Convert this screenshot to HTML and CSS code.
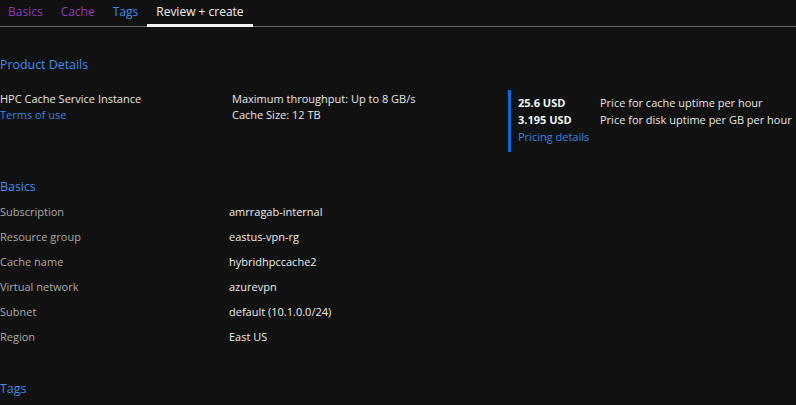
FILE: index.html
```html
<!DOCTYPE html>
<html lang="en">

<head>
  <meta charset="UTF-8">
  <meta name="viewport" content="width=device-width, initial-scale=1.0">
  <title>Review + create</title>
  <link rel="stylesheet" href="styles.css">
</head>

<body>
  <div class="tabs">
    <a href="#" class="tab visited">Basics</a>
    <a href="#" class="tab visited">Cache</a>
    <a href="#" class="tab">Tags</a>
    <a href="#" class="tab active">Review + create</a>
  </div>

  <h3 class="section-title first">Product Details</h3>
  <div class="product">
    <div class="product-col name-col">
      <div>HPC Cache Service Instance</div>
      <a href="#" class="link">Terms of use</a>
    </div>
    <div class="product-col spec-col">
      <div>Maximum throughput: Up to 8 GB/s</div>
      <div>Cache Size: 12 TB</div>
    </div>
    <div class="pricing">
      <div class="price-row"><span class="price">25.6 USD</span><span>Price for cache uptime per hour</span></div>
      <div class="price-row"><span class="price">3.195 USD</span><span>Price for disk uptime per GB per hour</span></div>
      <a href="#" class="link">Pricing details</a>
    </div>
  </div>

  <h3 class="section-title">Basics</h3>
  <div class="summary">
    <div class="label">Subscription</div><div class="value">amrragab-internal</div>
    <div class="label">Resource group</div><div class="value">eastus-vpn-rg</div>
    <div class="label">Cache name</div><div class="value">hybridhpccache2</div>
    <div class="label">Virtual network</div><div class="value">azurevpn</div>
    <div class="label">Subnet</div><div class="value">default (10.1.0.0/24)</div>
    <div class="label">Region</div><div class="value">East US</div>
  </div>

  <h3 class="section-title tags-title">Tags</h3>
</body>

</html>
```

FILE: styles.css
```css
body {
  font-family: "Open Sans", "Noto Sans", sans-serif;
  font-size: 11px;
  background-color: #111111;
  color: #e6e6e6;
  margin: 0;
  overflow: hidden;
}

a {
  text-decoration: none;
}

.tabs {
  display: flex;
  height: 26px;
  border-bottom: 1px solid #6a6a6a;
}

.tab {
  padding: 0 9px;
  line-height: 24px;
  font-size: 12px;
  color: #3b8eea;
  border-bottom: 3px solid transparent;
  margin-bottom: -1px;
}

.tab:first-child {
  padding-left: 8px;
}

.tab.visited {
  color: #8a3cb8;
}

.tab.active {
  color: #f0f0f0;
  border-bottom-color: #f5f5f5;
}

.section-title {
  margin: 0;
  font-size: 12.4px;
  font-weight: 500;
  line-height: 20px;
  color: #3f8ef0;
}

.section-title.first {
  margin-top: 28px;
}

.product {
  display: flex;
  margin-top: 15px;
  line-height: 16px;
}

.product-col {
  flex-shrink: 0;
  padding-top: 1px;
}

.name-col {
  width: 232px;
}

.spec-col {
  width: 276px;
}

.link {
  color: #3a86e0;
}

.pricing {
  flex-shrink: 0;
  border-left: 3px solid #1068dc;
  padding: 4px 0 7px 7px;
  line-height: 17px;
  white-space: nowrap;
}

.price-row {
  display: flex;
}

.price {
  width: 82px;
  font-weight: 700;
  color: #f5f5f5;
}

.product + .section-title {
  margin-top: 25px;
}

.summary {
  display: grid;
  grid-template-columns: 229px auto;
  grid-auto-rows: 25px;
  align-items: center;
  margin-top: 2px;
}

.label {
  color: #a8a8a8;
}

.value {
  color: #ececec;
}

.tags-title {
  margin-top: 30px;
}
```
